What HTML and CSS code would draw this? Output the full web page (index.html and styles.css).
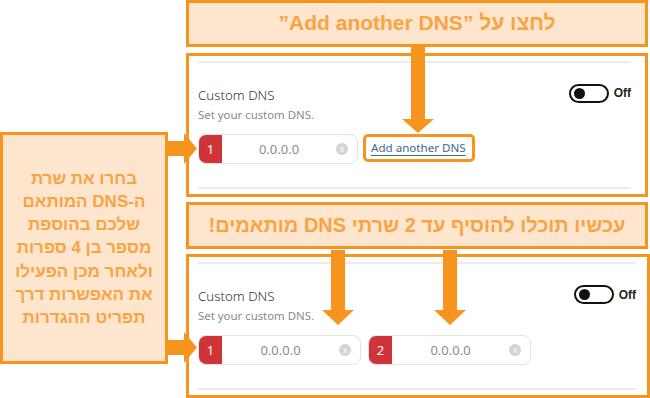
FILE: index.html
```html
<!DOCTYPE html>
<html lang="he">
<head>
    <meta charset="UTF-8" />
    <title>Custom DNS</title>
    <link rel="stylesheet" href="styles.css">
</head>
<body>
<div class="page">

    <div class="side">
        <div class="note" dir="rtl">
            <p>בחרו את שרת<br>ה-DNS המותאם<br>שלכם בהוספת<br>מספר בן 4 ספרות<br>ולאחר מכן הפעילו<br>את האפשרות דרך<br>תפריט ההגדרות</p>
        </div>
    </div>

    <div class="main">
        <div class="banner banner-top" dir="rtl">לחצו על ”Add another DNS”</div>

        <div class="card card-first">
            <div class="rule"></div>
            <div class="setting">
                <div class="setting-text">
                    <div class="setting-title">Custom DNS</div>
                    <div class="setting-desc">Set your custom DNS.</div>
                </div>
                <div class="toggle-wrap">
                    <span class="toggle"><span class="knob"></span></span>
                    <span class="toggle-label">Off</span>
                </div>
            </div>
            <div class="dns-row">
                <div class="dns-input">
                    <span class="dns-num">1</span>
                    <span class="dns-value">0.0.0.0</span>
                    <span class="dns-clear">x</span>
                </div>
                <div class="highlight"><a href="#" class="add-link">Add another DNS</a></div>
            </div>
            <div class="rule rule-bottom"></div>
        </div>

        <div class="banner banner-second" dir="rtl">עכשיו תוכלו להוסיף עד 2 שרתי DNS מותאמים!</div>

        <div class="card card-second">
            <div class="rule"></div>
            <div class="setting">
                <div class="setting-text">
                    <div class="setting-title">Custom DNS</div>
                    <div class="setting-desc">Set your custom DNS.</div>
                </div>
                <div class="toggle-wrap">
                    <span class="toggle"><span class="knob"></span></span>
                    <span class="toggle-label">Off</span>
                </div>
            </div>
            <div class="dns-row">
                <div class="dns-input wide">
                    <span class="dns-num">1</span>
                    <span class="dns-value">0.0.0.0</span>
                    <span class="dns-clear">x</span>
                </div>
                <div class="dns-input wide">
                    <span class="dns-num">2</span>
                    <span class="dns-value">0.0.0.0</span>
                    <span class="dns-clear">x</span>
                </div>
            </div>
            <div class="rule rule-bottom"></div>
        </div>
    </div>

    <!-- arrows drawn over the screenshots -->
    <svg class="arrow arrow-add" width="32" height="86" viewBox="0 0 32 86">
        <polygon points="9,0 23,0 23,72 32,72 16,86 0,72 9,72" />
    </svg>
    <svg class="arrow arrow-one" width="32" height="75" viewBox="0 0 32 75">
        <polygon points="9,0 23,0 23,60 32,60 16,75 0,60 9,60" />
    </svg>
    <svg class="arrow arrow-two" width="32" height="75" viewBox="0 0 32 75">
        <polygon points="9,0 23,0 23,60 32,60 16,75 0,60 9,60" />
    </svg>
    <svg class="arrow arrow-left-top" width="29" height="31" viewBox="0 0 29 31">
        <polygon points="0,8 16,8 16,0 29,15.5 16,31 16,23 0,23" />
    </svg>
    <svg class="arrow arrow-left-bottom" width="29" height="31" viewBox="0 0 29 31">
        <polygon points="0,8 16,8 16,0 29,15.5 16,31 16,23 0,23" />
    </svg>

</div>
</body>
</html>
```

FILE: styles.css
```css
body {
    margin: 0;
    background-color: #fff;
    font-family: "Noto Sans", "Open Sans", sans-serif;
}

.page {
    position: relative;
    display: flex;
    gap: 18px;
    width: 650px;
    height: 398px;
    overflow: hidden;
}

.side {
    width: 168px;
    flex-shrink: 0;
}

.note {
    box-sizing: border-box;
    margin-top: 132px;
    height: 232px;
    border: 3px solid #f7941d;
    background-color: #fde5ce;
    display: flex;
    align-items: center;
    justify-content: center;
}

.note p {
    margin: 0;
    text-align: center;
    font-family: "Liberation Sans", Arial, sans-serif;
    font-weight: bold;
    font-size: 17px;
    line-height: 23.2px;
    color: #f9a443;
}

.main {
    width: 462px;
    display: flex;
    flex-direction: column;
}

.banner {
    box-sizing: border-box;
    height: 47px;
    border: 3px solid #f7941d;
    background-color: #fde5ce;
    display: flex;
    align-items: center;
    justify-content: center;
    font-family: "Liberation Sans", Arial, sans-serif;
    font-weight: bold;
    font-size: 21px;
    color: #f9a443;
}

.banner-second {
    height: 48px;
    font-size: 20px;
    margin-top: 5px;
}

.card {
    box-sizing: border-box;
    border: 3px solid #f7941d;
    padding: 5px 14px 5px 9px;
    background-color: #fff;
    margin-top: 5px;
}

.card-first {
    margin-top: 6px;
}

.card-second {
    margin-right: -2px;
    padding-right: 11px;
}

.rule {
    height: 2px;
    background-color: #ececec;
}

.setting {
    display: flex;
    justify-content: space-between;
    align-items: flex-start;
    margin-top: 23px;
}

.setting-title {
    font-size: 13.3px;
    line-height: 18px;
    color: #333;
    font-weight: 300;
}

.setting-desc {
    margin-top: 3px;
    font-size: 11.4px;
    line-height: 16px;
    color: #8a8a8a;
}

.toggle-wrap {
    display: flex;
    align-items: center;
    margin-top: -2px;
}

.toggle {
    box-sizing: border-box;
    position: relative;
    width: 40px;
    height: 19px;
    border: 2px solid #111;
    border-radius: 10px;
}

.knob {
    position: absolute;
    left: 3px;
    top: 2px;
    width: 11px;
    height: 11px;
    border-radius: 50%;
    background-color: #111;
}

.toggle-label {
    margin-left: 5px;
    font-family: "Liberation Sans", Arial, sans-serif;
    font-weight: bold;
    font-size: 12px;
    color: #222;
}

.dns-row {
    display: flex;
    align-items: flex-start;
    gap: 5px;
    margin-top: 11px;
}

.dns-input {
    box-sizing: border-box;
    width: 160px;
    height: 30px;
    border: 1px solid #e2e2e2;
    border-radius: 8px;
    display: flex;
    align-items: center;
    overflow: hidden;
}

.dns-input.wide {
    width: 163px;
}

.dns-row .wide + .wide {
    margin-left: 2px;
}

.dns-num {
    width: 23px;
    height: 100%;
    background-color: #d13438;
    color: #fff;
    font-size: 13px;
    display: flex;
    align-items: center;
    justify-content: center;
}

.dns-value {
    flex: 1;
    text-align: center;
    font-size: 13px;
    color: #8c8c8c;
}

.dns-clear {
    width: 12px;
    height: 12px;
    margin-right: 9px;
    border-radius: 50%;
    background-color: #d4d4d4;
    color: #fff;
    font-size: 8px;
    line-height: 11px;
    text-align: center;
}

.highlight {
    box-sizing: border-box;
    height: 28px;
    border: 3px solid #f7941d;
    border-radius: 5px;
    padding: 0 6px 0 5px;
    display: flex;
    align-items: center;
}

.add-link {
    font-size: 11.6px;
    color: #3b6896;
    text-decoration: underline;
    text-underline-offset: 3px;
}

.rule-bottom {
    margin-top: 23px;
}

.arrow {
    position: absolute;
    fill: #f7941d;
}

.arrow-add { left: 402px; top: 47px; }
.arrow-one { left: 322px; top: 250px; }
.arrow-two { left: 434px; top: 250px; }
.arrow-left-top { left: 168px; top: 133px; }
.arrow-left-bottom { left: 168px; top: 332px; }
```
